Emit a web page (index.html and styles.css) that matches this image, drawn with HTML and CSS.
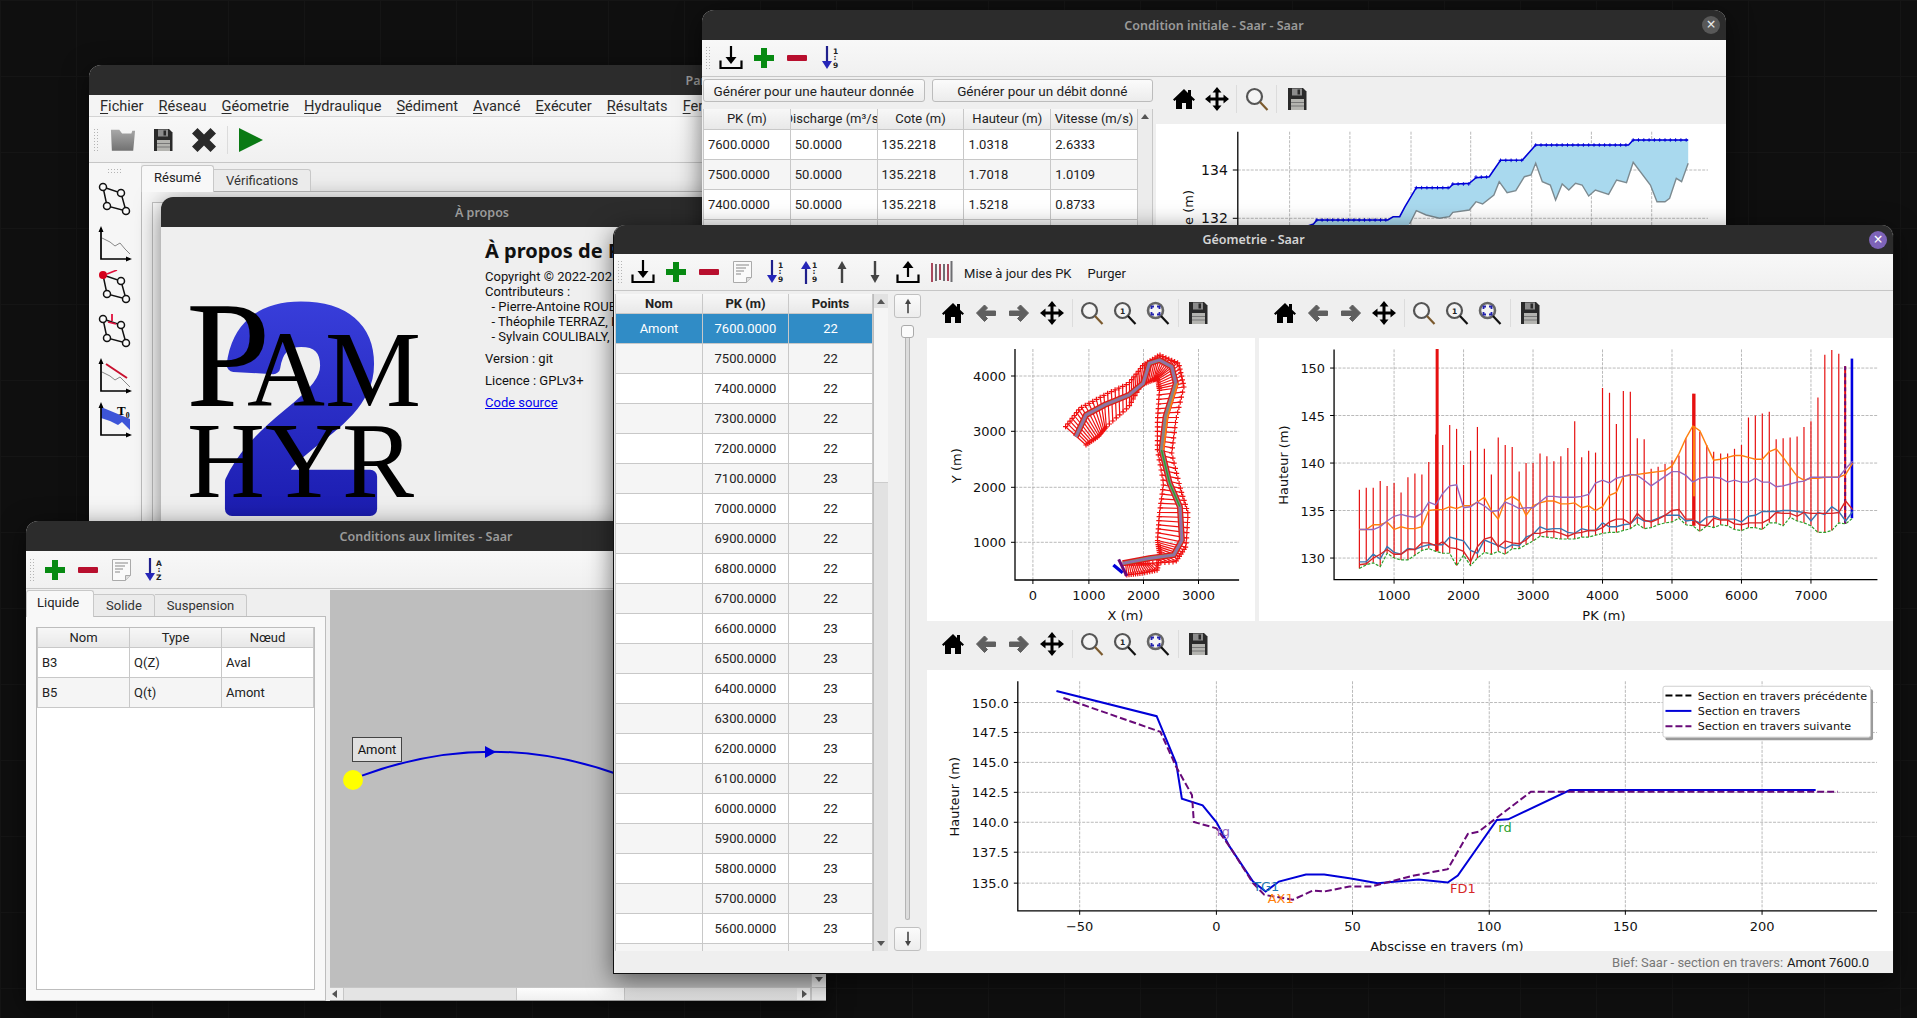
FILE: index.html
```html
<!DOCTYPE html>
<html lang="fr">
<head>
<meta charset="utf-8">
<title>Pamhyr2</title>
<link rel="stylesheet" href="styles.css">
</head>
<body>
<svg class="defs" aria-hidden="true">
  <defs>
    <linearGradient id="g-two" x1="0" y1="0" x2="0" y2="1"><stop offset="0" stop-color="#3f46e4"/><stop offset="1" stop-color="#1414a6"/></linearGradient>
    <linearGradient id="g-folder" x1="0" y1="0" x2="0" y2="1"><stop offset="0" stop-color="#a8a8a8"/><stop offset="1" stop-color="#727272"/></linearGradient>
    <symbol id="i-import" viewBox="0 0 24 24"><path class="s2" d="M12 0v15"/><path d="M6.5 11 12 18l5.5-7z"/><path class="s2" d="M1.5 14.500v7.500h21v-7.500"/></symbol>
    <symbol id="i-export" viewBox="0 0 24 24"><path class="s2" d="M12 7v10"/><path d="M6.500 8 12 1l5.500 7z"/><path class="s2" d="M1.500 14.500v7.500h21v-7.500"/></symbol>
    <symbol id="i-plus" viewBox="0 0 24 24"><path fill="#078a12" d="M9 2h6v7h7v6h-7v7H9v-7H2V9h7z"/></symbol>
    <symbol id="i-minus" viewBox="0 0 24 24"><rect x="2" y="9" width="20" height="6" rx="1" fill="#b80f2e"/></symbol>
    <symbol id="i-doc" viewBox="0 0 24 24"><path d="M3.500 1.500h18v16l-5 5h-13z" fill="#fafafa" stroke="#aaa"/><path d="M6 5h13M6 8h10M6 11h8M6 14h5" fill="none" stroke="#888"/><path d="M16.500 22.500v-5h5" fill="#ddd" stroke="#aaa"/></symbol>
    <symbol id="i-sort-down" viewBox="0 0 24 24"><path d="M9 0v17" stroke="#20208c" stroke-width="2.200" fill="none"/><path d="M4 15h10l-5 8z" fill="#2626b8"/><text class="ic-num" x="15" y="8">1</text><text class="ic-num" x="15.500" y="14">:</text><text class="ic-num" x="15" y="22">9</text></symbol>
    <symbol id="i-sort-up" viewBox="0 0 24 24"><path d="M9 7v17" stroke="#20208c" stroke-width="2.200" fill="none"/><path d="M4 9h10L9 1z" fill="#2626b8"/><text class="ic-num" x="15" y="8">1</text><text class="ic-num" x="15.500" y="14">:</text><text class="ic-num" x="15" y="22">9</text></symbol>
    <symbol id="i-sort-az" viewBox="0 0 24 24"><path d="M8 0v17" stroke="#20208c" stroke-width="2.200" fill="none"/><path d="M3 15h10l-5 8z" fill="#2626b8"/><text class="ic-num" x="14" y="8">A</text><text class="ic-num" x="15.500" y="14">:</text><text class="ic-num" x="14" y="22">Z</text></symbol>
    <symbol id="i-up" viewBox="0 0 24 24"><path d="M12 7v16" stroke="#444" stroke-width="2.400" fill="none"/><path d="M7.500 9 12 1l4.500 8z" fill="#444"/></symbol>
    <symbol id="i-down" viewBox="0 0 24 24"><path d="M12 1v16" stroke="#444" stroke-width="2.400" fill="none"/><path d="M7.500 15 12 23l4.500-8z" fill="#444"/></symbol>
    <symbol id="i-stripes" viewBox="0 0 24 24"><path d="M3 3v19M11 4v16M19 4v17" stroke="#a8485c" stroke-width="2" fill="none"/><path d="M7 4v17M15 4v17M22.500 1v21" stroke="#6e6e72" stroke-width="2" fill="none"/></symbol>
    <symbol id="i-home" viewBox="0 0 24 24"><path d="M12 2 1 12.500l1.500 1.500L4 12.700V22h6v-6h4v6h6v-9.300l1.500 1.300 1.500-1.500-4-3.800V3h-3v3z"/></symbol>
    <symbol id="i-back" viewBox="0 0 24 24"><path fill="#5f5f5f" stroke="#5f5f5f" stroke-linejoin="round" d="M2.500 12 10.500 4l3 3-3 3H21.500v4.500H10.500l3 3-3 3z"/></symbol>
    <symbol id="i-fwd" viewBox="0 0 24 24"><path fill="#5f5f5f" stroke="#5f5f5f" stroke-linejoin="round" d="M21.500 12 13.500 4l-3 3 3 3H2.500v4.500h11l-3 3 3 3z"/></symbol>
    <symbol id="i-move" viewBox="0 0 24 24"><path d="M12 0l4.500 5.500h-3v5h5v-3L24 12l-5.500 4.500v-3h-5v5h3L12 24l-4.500-5.500h3v-5h-5v3L0 12l5.500-4.500v3h5v-5h-3z"/></symbol>
    <symbol id="i-zoom" viewBox="0 0 24 24"><circle cx="9.500" cy="9.500" r="7.500" fill="#f4f4f4" stroke="#555" stroke-width="2.200"/><path d="M15 15l7.500 8" stroke="#7b5a2e" stroke-width="2.200" fill="none"/></symbol>
    <symbol id="i-zoom1" viewBox="0 0 24 24"><circle cx="9.500" cy="9.500" r="7.500" fill="#f4f4f4" stroke="#555" stroke-width="2.200"/><text class="ic-num" x="7" y="13">1</text><path d="M15 15l7.500 8" stroke="#111" stroke-width="2.200" fill="none"/></symbol>
    <symbol id="i-zoomfit" viewBox="0 0 24 24"><circle cx="9.500" cy="9.500" r="7.500" fill="#f4f4f4" stroke="#666" stroke-width="2.600"/><path d="M5.500 8V5.500H8M11 5.500h2.500V8M13.500 11v2.500H11M8 13.500H5.500V11" fill="none" stroke="#2222b0" stroke-width="1.800"/><path d="M15 15l7.500 8" stroke="#111" stroke-width="2.200" fill="none"/></symbol>
    <symbol id="i-save" viewBox="0 0 24 24"><path d="M3 1h15l3.500 3.500V23H3z" fill="#2a2a2a"/><rect x="7" y="1.500" width="10" height="7" fill="#8c8c8c"/><rect x="12.500" y="2.500" width="2.500" height="5" fill="#2a2a2a"/><rect x="6" y="12" width="13" height="11" fill="#b4b4b0"/><path d="M6 15.500h13M6 19h13" stroke="#777" fill="none"/></symbol>
    <symbol id="i-folder" viewBox="0 0 28 24"><path fill="url(#g-folder)" d="M1 1h9l3 4h10l1-3h3l-2 21.500H2z"/></symbol>
    <symbol id="i-cross" viewBox="0 0 24 24"><path fill="#2a2a2a" d="M5.500 0 12 6.500 18.500 0 24 5.500 17.500 12 24 18.500 18.500 24 12 17.500 5.500 24 0 18.500 6.500 12 0 5.500z"/></symbol>
    <symbol id="i-play" viewBox="0 0 24 24"><path fill="#0a7a14" d="M0 0l24 12L0 24z"/></symbol>
    <symbol id="i-net" viewBox="0 0 34 36"><g class="net"><path d="M5 5 23 11 28 29 9 24z"/><circle cx="5" cy="5" r="3.500"/><circle cx="23" cy="11" r="3.500"/><circle cx="9" cy="24" r="3.500"/><circle cx="28" cy="29" r="3.500"/></g></symbol>
    <symbol id="i-net-add" viewBox="0 0 34 36"><g class="net"><path d="M5 5 23 11 28 29 9 24z"/><circle cx="23" cy="11" r="3.500"/><circle cx="9" cy="24" r="3.500"/><circle cx="28" cy="29" r="3.500"/></g><circle cx="5" cy="5" r="4" fill="#d5001c"/><path d="M19 0 9 4" stroke="#e0103c" stroke-width="1.600"/></symbol>
    <symbol id="i-net-split" viewBox="0 0 34 36"><g class="net"><path d="M5 5 23 11 28 29 9 24z"/><circle cx="5" cy="5" r="3.500"/><circle cx="23" cy="11" r="3.500"/><circle cx="9" cy="24" r="3.500"/><circle cx="28" cy="29" r="3.500"/></g><path d="M14-1v8M10 8l8 2" stroke="#e0103c" stroke-width="1.800"/></symbol>
    <symbol id="i-graph" viewBox="0 0 34 36"><path class="ax" d="M3 3v30h29"/><path d="M3 0 .5 6h5zM34 33l-6-2.500v5z"/><path d="M4 12l8 4 5 4 5-3 5 6 5 5" fill="none" stroke="#888"/></symbol>
    <symbol id="i-graph-arrow" viewBox="0 0 34 36"><path class="ax" d="M3 3v30h29"/><path d="M3 0 .5 6h5zM34 33l-6-2.500v5z"/><path d="M4 14l8 4 5 4 5-3 5 5 5 5" fill="none" stroke="#888"/><path d="M8 6l21 14" stroke="#c8102e" stroke-width="2"/></symbol>
    <symbol id="i-graph-t" viewBox="0 0 34 36"><path d="M3 5l29 12v11L24 20l-4 3-8-4-9-3z" fill="#3d55d8"/><path class="ax" d="M3 3v30h29"/><path d="M3 0 .5 6h5zM34 33l-6-2.500v5z"/><text class="ic-t" x="19" y="13">T₀</text></symbol>
  </defs>
</svg>

<main class="desktop">

  <section class="window w-main">
    <header class="titlebar"><span>Pamhyr2 - Saar</span></header>
    <nav class="menubar">
      <span><u>F</u>ichier</span><span><u>R</u>éseau</span><span><u>G</u>éometrie</span><span><u>H</u>ydraulique</span><span><u>S</u>édiment</span><span><u>A</u>vancé</span><span><u>E</u>xécuter</span><span><u>R</u>ésultats</span><span><u>F</u>enêtres</span>
    </nav>
    <div class="toolbar tb-main">
      <i class="grip"></i>
      <svg class="ic-28"><use href="#i-folder"/></svg>
      <svg class="ic-28"><use href="#i-save"/></svg>
      <svg class="ic-28"><use href="#i-cross"/></svg>
      <i class="tb-sep"></i>
      <svg class="ic-28"><use href="#i-play"/></svg>
    </div>
    <div class="main-body">
      <aside class="sidebar">
        <i class="grip-h"></i>
        <svg class="side-ic"><use href="#i-net"/></svg>
        <svg class="side-ic"><use href="#i-graph"/></svg>
        <svg class="side-ic"><use href="#i-net-add"/></svg>
        <svg class="side-ic"><use href="#i-net-split"/></svg>
        <svg class="side-ic"><use href="#i-graph-arrow"/></svg>
        <svg class="side-ic"><use href="#i-graph-t"/></svg>
      </aside>
      <div class="main-content">
        <div class="tabs tabs-main"><span class="tab on">Résumé</span><span class="tab">Vérifications</span></div>
        <div class="pane pane-main"><div class="frame"></div></div>
      </div>
    </div>
  </section>

  <section class="window w-about">
    <header class="titlebar"><span>À propos</span></header>
    <div class="about-body">
      <svg class="logo" viewBox="162 228 323 330">
        <text class="logo-two" x="223" y="510">2</text>
        <text class="logo-big" x="187" y="407">P</text>
        <text class="logo-mid" x="248" y="407">A</text>
        <text class="logo-mid" x="326" y="407">M</text>
        <text class="logo-mid" x="188" y="498">H</text>
        <text class="logo-mid" x="266" y="498">Y</text>
        <text class="logo-mid" x="343" y="498">R</text>
      </svg>
      <div class="about-text">
        <h1>À propos de Pamhyr2</h1>
        <p>Copyright © 2022-2025 INRAE<br>Contributeurs :<br>&nbsp;&nbsp;- Pierre-Antoine ROUBY<br>&nbsp;&nbsp;- Théophile TERRAZ, INRAE<br>&nbsp;&nbsp;- Sylvain COULIBALY, INRAE</p>
        <p>Version : git</p>
        <p>Licence : GPLv3+</p>
        <p><a href="#code">Code source</a></p>
      </div>
    </div>
  </section>

  <section class="window w-init">
    <header class="titlebar"><span>Condition initiale - Saar - Saar</span><b class="close">×</b></header>
    <div class="toolbar tb-init">
      <i class="grip"></i>
      <svg class="ic"><use href="#i-import"/></svg>
      <svg class="ic"><use href="#i-plus"/></svg>
      <svg class="ic"><use href="#i-minus"/></svg>
      <svg class="ic"><use href="#i-sort-down"/></svg>
    </div>
    <div class="init-body">
      <div class="init-left">
        <div class="init-btns"><button>Générer pour une hauteur donnée</button><button>Générer pour un débit donné</button></div>
        <div class="init-table">
          <table class="grid-table">
            <thead><tr><th>PK (m)</th><th><div class="clip"><span>Discharge (m³/s)</span></div></th><th>Cote (m)</th><th>Hauteur (m)</th><th>Vitesse (m/s)</th></tr></thead>
            <tbody>
              <tr><td>7600.0000</td><td>50.0000</td><td>135.2218</td><td>1.0318</td><td>2.6333</td></tr>
              <tr><td>7500.0000</td><td>50.0000</td><td>135.2218</td><td>1.7018</td><td>1.0109</td></tr>
              <tr><td>7400.0000</td><td>50.0000</td><td>135.2218</td><td>1.5218</td><td>0.8733</td></tr>
              <tr><td>7300.0000</td><td>50.0000</td><td>135.2218</td><td>1.3018</td><td>0.7012</td></tr>
            </tbody>
          </table>
          <div class="vscroll vs-init"><span class="arrow-up"></span></div>
        </div>
      </div>
      <div class="init-plot">
        <div class="mpl-tb tb-short">
          <svg class="ic"><use href="#i-home"/></svg><svg class="ic"><use href="#i-move"/></svg><i class="tb-sep"></i><svg class="ic"><use href="#i-zoom"/></svg><i class="tb-sep"></i><svg class="ic"><use href="#i-save"/></svg>
        </div>
        <svg id="plot-init" class="canvas" viewBox="1156 124 570 126"></svg>
      </div>
    </div>
  </section>

  <section class="window w-bc">
    <header class="titlebar"><span>Conditions aux limites - Saar</span></header>
    <div class="toolbar tb-bc">
      <i class="grip"></i>
      <svg class="ic"><use href="#i-plus"/></svg>
      <svg class="ic"><use href="#i-minus"/></svg>
      <svg class="ic"><use href="#i-doc"/></svg>
      <svg class="ic"><use href="#i-sort-az"/></svg>
    </div>
    <div class="bc-body">
      <div class="bc-left">
        <div class="tabs tabs-bc"><span class="tab on">Liquide</span><span class="tab">Solide</span><span class="tab">Suspension</span></div>
        <div class="pane pane-bc">
          <div class="bc-table">
            <table class="grid-table">
              <thead><tr><th>Nom</th><th>Type</th><th>Nœud</th></tr></thead>
              <tbody>
                <tr><td>B3</td><td>Q(Z)</td><td>Aval</td></tr>
                <tr><td>B5</td><td>Q(t)</td><td>Amont</td></tr>
              </tbody>
            </table>
          </div>
        </div>
      </div>
      <div class="bc-right">
        <div class="bc-view">
          <div class="bc-canvas">
            <svg class="network" viewBox="330 590 481 397">
              <path class="edge" d="M362 775.600Q490 728 620 775"/>
              <path class="edge-head" d="M485 746l11 6-11 6z"/>
              <circle class="node" cx="353" cy="780" r="10"/>
            </svg>
            <span class="node-label">Amont</span>
          </div>
          <div class="vscroll vs-bc"><span class="arrow-down"></span></div>
        </div>
        <div class="hscroll">
          <span class="h-btn"><span class="arrow-left"></span></span>
          <span class="h-before"></span><span class="h-thumb"></span><span class="h-after"></span>
          <span class="h-btn"><span class="arrow-right"></span></span>
          <span class="h-corner"></span>
        </div>
      </div>
    </div>
  </section>

  <section class="window w-geo">
    <header class="titlebar active"><span>Géometrie - Saar</span><b class="close on">×</b></header>
    <div class="toolbar tb-geo">
      <i class="grip"></i>
      <svg class="ic"><use href="#i-import"/></svg>
      <svg class="ic"><use href="#i-plus"/></svg>
      <svg class="ic"><use href="#i-minus"/></svg>
      <svg class="ic"><use href="#i-doc"/></svg>
      <svg class="ic"><use href="#i-sort-down"/></svg>
      <svg class="ic"><use href="#i-sort-up"/></svg>
      <svg class="ic"><use href="#i-up"/></svg>
      <svg class="ic"><use href="#i-down"/></svg>
      <svg class="ic"><use href="#i-export"/></svg>
      <svg class="ic"><use href="#i-stripes"/></svg>
      <span class="tb-text">Mise à jour des PK</span>
      <span class="tb-text">Purger</span>
    </div>
    <div class="geo-body">
      <div class="geo-table">
        <table class="grid-table geo">
          <thead><tr><th>Nom</th><th>PK (m)</th><th>Points</th></tr></thead>
          <tbody>
            <tr class="sel"><td>Amont</td><td>7600.0000</td><td>22</td></tr>
            <tr><td></td><td>7500.0000</td><td>22</td></tr>
            <tr><td></td><td>7400.0000</td><td>22</td></tr>
            <tr><td></td><td>7300.0000</td><td>22</td></tr>
            <tr><td></td><td>7200.0000</td><td>22</td></tr>
            <tr><td></td><td>7100.0000</td><td>23</td></tr>
            <tr><td></td><td>7000.0000</td><td>22</td></tr>
            <tr><td></td><td>6900.0000</td><td>22</td></tr>
            <tr><td></td><td>6800.0000</td><td>22</td></tr>
            <tr><td></td><td>6700.0000</td><td>22</td></tr>
            <tr><td></td><td>6600.0000</td><td>23</td></tr>
            <tr><td></td><td>6500.0000</td><td>23</td></tr>
            <tr><td></td><td>6400.0000</td><td>23</td></tr>
            <tr><td></td><td>6300.0000</td><td>23</td></tr>
            <tr><td></td><td>6200.0000</td><td>23</td></tr>
            <tr><td></td><td>6100.0000</td><td>22</td></tr>
            <tr><td></td><td>6000.0000</td><td>22</td></tr>
            <tr><td></td><td>5900.0000</td><td>22</td></tr>
            <tr><td></td><td>5800.0000</td><td>23</td></tr>
            <tr><td></td><td>5700.0000</td><td>23</td></tr>
            <tr><td></td><td>5600.0000</td><td>23</td></tr>
            <tr><td></td><td>5500.0000</td><td>23</td></tr>
          </tbody>
        </table>
        <div class="vscroll vs-geo"><span class="arrow-up"></span><span class="vs-thumb"></span><span class="arrow-down"></span></div>
      </div>
      <div class="slider-col">
        <button class="step"><svg class="ic-16"><use href="#i-up"/></svg></button>
        <div class="slider"><span class="slider-handle"></span><span class="slider-groove"></span></div>
        <button class="step"><svg class="ic-16"><use href="#i-down"/></svg></button>
      </div>
      <div class="plots">
        <div class="plots-top">
          <div class="plot-panel p-map">
            <div class="mpl-tb">
              <svg class="ic"><use href="#i-home"/></svg><svg class="ic"><use href="#i-back"/></svg><svg class="ic"><use href="#i-fwd"/></svg><svg class="ic"><use href="#i-move"/></svg><i class="tb-sep"></i><svg class="ic"><use href="#i-zoom"/></svg><svg class="ic"><use href="#i-zoom1"/></svg><svg class="ic"><use href="#i-zoomfit"/></svg><i class="tb-sep"></i><svg class="ic"><use href="#i-save"/></svg>
            </div>
            <svg id="plot-map" class="canvas" viewBox="927 338 327 283"></svg>
          </div>
          <div class="plot-panel p-long">
            <div class="mpl-tb">
              <svg class="ic"><use href="#i-home"/></svg><svg class="ic"><use href="#i-back"/></svg><svg class="ic"><use href="#i-fwd"/></svg><svg class="ic"><use href="#i-move"/></svg><i class="tb-sep"></i><svg class="ic"><use href="#i-zoom"/></svg><svg class="ic"><use href="#i-zoom1"/></svg><svg class="ic"><use href="#i-zoomfit"/></svg><i class="tb-sep"></i><svg class="ic"><use href="#i-save"/></svg>
            </div>
            <svg id="plot-long" class="canvas" viewBox="1258 338 636 283"></svg>
          </div>
        </div>
        <div class="plot-panel p-cross">
          <div class="mpl-tb tb-cross">
            <svg class="ic"><use href="#i-home"/></svg><svg class="ic"><use href="#i-back"/></svg><svg class="ic"><use href="#i-fwd"/></svg><svg class="ic"><use href="#i-move"/></svg><i class="tb-sep"></i><svg class="ic"><use href="#i-zoom"/></svg><svg class="ic"><use href="#i-zoom1"/></svg><svg class="ic"><use href="#i-zoomfit"/></svg><i class="tb-sep"></i><svg class="ic"><use href="#i-save"/></svg>
          </div>
          <svg id="plot-cross" class="canvas" viewBox="926 670 968 282"></svg>
        </div>
      </div>
    </div>
    <footer class="statusbar"><span class="st-dim">Bief: Saar - section en travers:</span> <span>Amont 7600.0</span></footer>
  </section>

</main>
<script src="script.js"></script>
</body>
</html>
```

FILE: styles.css
```css
* { box-sizing: border-box; }
html, body { margin: 0; padding: 0; height: 100%; }
body { overflow: hidden; background: #0f0f0f; font: 13px "Roboto", "Noto Sans", sans-serif; color: #1a1a1a; }
.defs { position: absolute; width: 0; height: 0; }
.desktop {
  position: relative; width: 1917px; height: 1018px; overflow: hidden;
  background-color: #0f0f0f;
  background-image: linear-gradient(90deg, #151515 1px, transparent 1px), linear-gradient(#151515 1px, transparent 1px);
  background-size: 76px 76px;
}

/* desktop windows */
.window { position: absolute; display: flex; flex-direction: column; background: #efefef; border-radius: 12px 12px 0 0; box-shadow: 0 6px 26px rgba(0,0,0,.55); overflow: hidden; }
.w-main { left: 89px; top: 65px; width: 1285px; height: 840px; }
.w-about { left: 161px; top: 197px; width: 642px; height: 360px; }
.w-init { left: 702px; top: 10px; width: 1024px; height: 240px; }
.w-bc { left: 26px; top: 521px; width: 800px; height: 480px; }
.w-geo { left: 613px; top: 225px; width: 1281px; height: 749px; border: 1px solid #111; border-top: 0; }

.titlebar { flex: none; height: 30px; background: #2c2c2c; color: #9a9a9a; font: 600 12.500px "Noto Sans", sans-serif; display: flex; align-items: center; justify-content: center; position: relative; }
.w-geo .titlebar { height: 29px; }
.titlebar.active { color: #d4d4d4; }
.close { position: absolute; right: 6px; top: 6px; width: 18px; height: 18px; border-radius: 50%; background: #585858; color: #e8e8e8; font: 400 16px/17px "Noto Sans", sans-serif; text-align: center; }
.close.on { background: #7d63b8; color: #fff; }

/* toolbars */
.toolbar { flex: none; display: flex; align-items: center; background: linear-gradient(#f8f8f8, #f0f0f0); border-bottom: 1px solid #c6c6c6; }
.grip { display: block; width: 5px; height: 24px; background-image: radial-gradient(#b4b4b4 .8px, transparent .9px); background-size: 3px 3px; }
.grip-h { display: block; width: 16px; height: 5px; margin: 5px auto 9px; background-image: radial-gradient(#b4b4b4 .8px, transparent .9px); background-size: 3px 3px; }
.tb-sep { display: block; width: 1px; height: 28px; background: #dcdcdc; margin: 0 3px; flex: none; }
.ic { width: 24px; height: 24px; flex: none; }
.ic-28 { width: 26px; height: 24px; flex: none; }
.ic-16 { width: 16px; height: 18px; display: block; margin: auto; }
.ic-num { font: bold 7.500px "DejaVu Sans", sans-serif; fill: #222; }
.ic-t { font: bold 13px "Liberation Serif", serif; fill: #000; }
.s2 { fill: none; stroke: #000; stroke-width: 2.200; }
.tb-main { height: 46px; padding-left: 4px; gap: 14.500px; }
.tb-main .grip { margin-right: -3px; }
.tb-main .tb-sep { margin: 0 -5px 0 -4px; }
.tb-init { height: 37px; padding-left: 3px; gap: 9px; }
.tb-bc { height: 38px; padding-left: 3px; gap: 9px; }
.tb-geo { height: 37px; padding-left: 3px; gap: 9.100px; }
.tb-text { font-size: 13px; margin-left: 4px; margin-right: 3px; padding-top: 2px; }
.tb-text:first-of-type { margin-left: 2px; }

/* main window */
.menubar { flex: none; height: 22px; display: flex; align-items: center; gap: 15px; padding-left: 11px; background: #f4f4f4; border-bottom: 1px solid #d4d4d4; font-size: 14.600px; color: #2a2a2a; }
.menubar u { text-underline-offset: 2px; }
.main-body { flex: 1; display: flex; min-height: 0; }
.sidebar { flex: none; width: 52px; background: #f6f6f6; padding-top: 0; display: flex; flex-direction: column; align-items: center; }
.side-ic { width: 34px; height: 36px; margin-bottom: 8px; flex: none; }
.net { fill: none; stroke: #111; stroke-width: 1.500; }
.net circle { fill: #fafafa; }
.ax { fill: none; stroke: #000; stroke-width: 1.700; }
.main-content { flex: 1; display: flex; flex-direction: column; padding-top: 2px; }
.tabs { display: flex; align-items: flex-end; flex: none; position: relative; z-index: 1; }
.tab { height: 22px; line-height: 22px; padding: 0 12px; background: #ebebeb; border: 1px solid #c8c8c8; border-bottom: 0; border-left: 0; border-radius: 0 3px 0 0; color: #333; font-size: 13px; }
.tab.on { height: 27px; line-height: 24px; background: #f8f8f8; border-left: 1px solid #c8c8c8; border-radius: 3px 3px 0 0; margin-bottom: -1px; color: #222; }
.tabs-bc .tab.on { padding: 0 14px 0 10px; }
.pane { border: 1px solid #bdbdbd; background: #f8f8f8; }
.pane-main { flex: 1; padding: 10px 0 0 10px; }
.frame { height: 100%; border: 1px solid #c4c4c4; background: #fff; }

/* about */
.about-body { flex: 1; display: flex; min-height: 0; }
.logo { width: 323px; height: 330px; flex: none; display: block; }
.logo-two { font: bold 287px "Liberation Sans", sans-serif; fill: url(#g-two); stroke: url(#g-two); stroke-width: 14px; stroke-linejoin: round; }
.logo-big { font: 152px "Liberation Serif", serif; fill: #000; }
.logo-mid { font: 108px "Liberation Serif", serif; fill: #000; }
.about-text { padding: 12px 0 0 1px; font-size: 13px; line-height: 15px; width: 300px; color: #111; }
.about-text h1 { margin: 0 0 6px; font: 700 20px/24px "Noto Sans", sans-serif; white-space: nowrap; }
.about-text p { margin: 0 0 7px; white-space: nowrap; }
.about-text a { color: #0000ee; }

/* tables */
.grid-table { table-layout: fixed; border-collapse: collapse; width: 100%; font-size: 13px; background: #fff; }
.grid-table th { height: 20px; padding: 0; font-weight: 400; text-align: center; background: linear-gradient(#f7f7f7, #e8e8e8); border: 1px solid #c8c8c8; border-top: 0; overflow: hidden; white-space: nowrap; color: #222; }
.grid-table td { height: 30px; padding: 0 4px; border: 1px solid #c8c8c8; overflow: hidden; white-space: nowrap; color: #222; }
.grid-table tbody tr:nth-child(even) td { background: #f5f5f5; }
.clip { display: flex; justify-content: center; overflow: hidden; white-space: nowrap; }
.clip span { flex: none; }
.grid-table.geo { width: 258px; flex: none; align-self: flex-start; }
.grid-table.geo th { font-weight: 700; height: 19px; }
.grid-table.geo th:nth-child(1) { width: 87px; }
.grid-table.geo th:nth-child(2) { width: 86px; }
.grid-table.geo td { text-align: center; }
.grid-table tr.sel td { background: #308cc6; color: #fff; border-color: #c8c8c8; }

/* condition initiale */
.init-body { flex: 1; display: flex; min-height: 0; }
.init-left { flex: none; width: 454px; padding: 2px 3px 0 1px; }
.init-btns { display: flex; gap: 7px; margin-bottom: 7px; }
.init-btns button { flex: 1; height: 23px; padding: 0; font: 13.500px "Roboto", "Noto Sans", sans-serif; color: #222; background: linear-gradient(#fbfbfb, #ececec); border: 1px solid #bcbcbc; border-radius: 3px; }
.init-table { display: flex; }
.init-table .grid-table { flex: 1; }
.init-plot { flex: 1; display: flex; flex-direction: column; min-width: 0; }
.canvas { display: block; background: #fff; flex: 1; min-height: 0; width: 100%; }
.mpl-tb { flex: none; height: 47px; padding: 0 0 3px 9.500px; display: flex; align-items: center; background: #efefef; }
.mpl-tb .ic { width: 24px; margin: 0 4.500px; }
.tb-cross { height: 49px; }
.tb-short { padding-left: 11px; }

/* scrollbars */
.vscroll { flex: none; width: 15px; background: #e3e3e3; position: relative; }
.vs-init { height: 120px; background: #ececec; border-right: 1px solid #c8c8c8; }
.vs-bc { background: #e8e8e8; border-left: 1px solid #c6c6c6; }
.arrow-up, .arrow-down, .arrow-left, .arrow-right { position: absolute; width: 0; height: 0; }
.arrow-up { left: 3px; top: 5px; border: 4.500px solid transparent; border-top: 0; border-bottom: 5px solid #555; }
.arrow-down { left: 3px; bottom: 5px; border: 4.500px solid transparent; border-bottom: 0; border-top: 5px solid #555; }
.vs-thumb { position: absolute; left: 0; right: 0; top: 14px; height: 175px; background: #f5f5f5; border-bottom: 1px solid #ccc; }
.vs-geo { background: #e2e2e2; border-left: 1px solid #bdbdbd; }

/* boundary conditions */
.bc-body { flex: 1; display: flex; gap: 4px; min-height: 0; }
.bc-left { flex: none; width: 300px; display: flex; flex-direction: column; padding-top: 1px; }
.pane-bc { flex: 1; padding: 10px; min-height: 0; border-left: 0; }
.bc-table { height: 100%; border: 1px solid #bdbdbd; background: #fff; }
.bc-table .grid-table td { border-color: #c8c8c8; }
.bc-table .grid-table th { height: 19px; }
.bc-right { flex: 1; display: flex; flex-direction: column; min-width: 0; padding-top: 1px; }
.bc-view { flex: 1; display: flex; min-height: 0; }
.bc-canvas { flex: 1; position: relative; background: #bebebe; min-width: 0; }
.network { width: 100%; height: 100%; display: block; }
.edge { fill: none; stroke: #0000d8; stroke-width: 2; }
.edge-head { fill: #0000d8; }
.node { fill: #ffff00; }
.node-label { position: absolute; left: 22px; top: 147px; width: 50px; height: 25px; line-height: 23px; text-align: center; background: #e0e0e0; border: 1px solid #444; font-size: 13px; color: #111; }
.hscroll { flex: none; height: 14px; display: flex; background: #e4e4e4; border-top: 1px solid #c6c6c6; border-bottom: 1px solid #9a9a9a; }
.h-btn { width: 14px; flex: none; position: relative; background: #f0f0f0; border-right: 1px solid #c6c6c6; }
.h-before { width: 172px; flex: none; background: #e4e4e4; }
.h-thumb { width: 109px; flex: none; background: linear-gradient(#fdfdfd, #f0f0f0); border: 1px solid #c8c8c8; border-width: 0 1px; }
.h-after { flex: 1; background: linear-gradient(#e8e8e8, #dcdcdc); }
.h-corner { width: 15px; flex: none; background: #e8e8e8; border-left: 1px solid #c6c6c6; }
.arrow-left { left: 2px; top: 2px; border: 4.500px solid transparent; border-left: 0; border-right: 5px solid #555; }
.arrow-right { left: 5px; top: 2px; border: 4.500px solid transparent; border-right: 0; border-left: 5px solid #555; }

/* geometry */
.geo-body { flex: 1; display: grid; grid-template-columns: 274px 39px 1fr; min-height: 0; }
.geo-table { display: flex; padding: 3px 0 0 1px; overflow: hidden; min-height: 0; height: 100%; }
.vs-geo { align-self: stretch; }
.slider-col { display: flex; flex-direction: column; align-items: center; padding: 3px 0 0 0; }
.step { flex: none; width: 27px; height: 24px; padding: 0; background: linear-gradient(#fbfbfb, #ededed); border: 1px solid #c0c0c0; border-radius: 3px; }
.slider { flex: 1; width: 100%; display: flex; flex-direction: column; align-items: center; padding: 7px 0 7px; }
.slider-handle { flex: none; width: 13px; height: 13px; background: #fbfbfb; border: 1px solid #aaa; border-radius: 3px; }
.slider-groove { flex: 1; width: 5px; background: #dcdcdc; border: 1px solid #b4b4b4; border-top: 0; border-radius: 0 0 3px 3px; }
.plots { display: grid; grid-template-rows: 330px 331px; min-width: 0; min-height: 0; }
.plots-top { display: flex; gap: 4px; min-height: 0; }
.plot-panel { display: flex; flex-direction: column; min-height: 0; min-width: 0; }
.p-map { width: 328px; flex: none; }
.p-long { flex: 1; }
.statusbar { flex: none; height: 22px; display: flex; align-items: center; justify-content: flex-end; gap: 4px; padding-right: 24px; font-size: 13px; background: #efefef; color: #1a1a1a; }
.st-dim { color: #777; }

/* plots */
.gl { stroke: #a8a8a8; stroke-width: .8; stroke-dasharray: 3 1.300; fill: none; }
.sp { stroke: #000; stroke-width: 1.300; fill: none; }
.tk { font: 13px "DejaVu Sans", sans-serif; fill: #111; }
.tk-m { font-size: 14px; }
.lbl { font: 13px "DejaVu Sans", sans-serif; fill: #111; }
.lg { font: 11.200px "DejaVu Sans", sans-serif; fill: #111; }
.lg-box { fill: #fff; stroke: #cfcfcf; }
.lg-shadow { fill: #9a9a9a; }
.nofill { fill: none; }
```

FILE: script.js
```js
const NS = 'http://www.w3.org/2000/svg';
function el(svg, tag, attrs, text) {
  const e = document.createElementNS(NS, tag);
  for (const k in attrs) e.setAttribute(k, attrs[k]);
  if (text !== undefined) e.textContent = text;
  svg.appendChild(e);
  return e;
}
function line(svg, pts, stroke, width, dash, cls) {
  const a = { d: 'M' + pts.map(p => p[0].toFixed(1) + ' ' + p[1].toFixed(1)).join('L'), fill: 'none', stroke: stroke, 'stroke-width': width };
  if (dash) a['stroke-dasharray'] = dash;
  if (cls) a.class = cls;
  return el(svg, 'path', a);
}
function axes(svg, o) {
  o.xt.forEach(t => {
    line(svg, [[t[0], o.top], [t[0], o.bottom]], '#a8a8a8', .8, null, 'gl');
    line(svg, [[t[0], o.bottom], [t[0], o.bottom + 4]], '#000', 1);
    el(svg, 'text', { class: 'tk', x: t[0], y: o.bottom + 20, 'text-anchor': 'middle' }, t[1]);
  });
  o.yt.forEach(t => {
    line(svg, [[o.left, t[0]], [o.right, t[0]]], '#a8a8a8', .8, null, 'gl');
    line(svg, [[o.left - 4, t[0]], [o.left, t[0]]], '#000', 1);
    el(svg, 'text', { class: 'tk', x: o.left - 9, y: t[0] + 5, 'text-anchor': 'end' }, t[1]);
  });
  line(svg, [[o.left, o.top], [o.left, o.bottom], [o.right, o.bottom]], '#000', 1.3);
  if (o.xl) el(svg, 'text', { class: 'lbl', x: o.xl[0], y: o.xl[1], 'text-anchor': 'middle' }, o.xl[2]);
  if (o.yl) el(svg, 'text', { class: 'lbl', x: 0, y: 0, 'text-anchor': 'middle', transform: 'translate(' + o.yl[0] + ' ' + o.yl[1] + ') rotate(-90)' }, o.yl[2]);
}
function resample(p, n) {
  const out = [];
  for (let i = 0; i <= n; i++) {
    const t = i / n * (p.length - 1), k = Math.min(Math.floor(t), p.length - 2), f = t - k;
    out.push([p[k][0] + (p[k + 1][0] - p[k][0]) * f, p[k][1] + (p[k + 1][1] - p[k][1]) * f]);
  }
  return out;
}
function plus(svg, pts, s, color, w) {
  const d = pts.map(p => 'M' + (p[0] - s).toFixed(1) + ' ' + p[1].toFixed(1) + 'h' + 2 * s + 'M' + p[0].toFixed(1) + ' ' + (p[1] - s).toFixed(1) + 'v' + 2 * s).join('');
  el(svg, 'path', { d: d, stroke: color, 'stroke-width': w, fill: 'none' });
}

/* ---------- plan view ---------- */
(function () {
  const svg = document.getElementById('plot-map');
  const z = p => p.map(q => [610 + q[0] / 2.45, 220 + q[1] / 3]);
  axes(svg, {
    left: 1014.5, right: 1238.6, top: 349, bottom: 580,
    xt: [[1032.4, '0'], [1088.4, '1000'], [1143, '2000'], [1198, '3000']],
    yt: [[376, '4000'], [431.3, '3000'], [487.3, '2000'], [542.3, '1000']],
    xl: [1125, 620, 'X (m)'], yl: [960, 465.7, 'Y (m)']
  });
  const center = z([[1140, 650], [1165, 585], [1210, 555], [1270, 525], [1305, 490], [1320, 430], [1345, 420], [1375, 440], [1385, 490], [1360, 590], [1350, 690], [1370, 790], [1395, 860], [1400, 960], [1380, 1005], [1320, 1015], [1255, 1030]]);
  const a = z([[1115, 620], [1150, 565], [1210, 525], [1270, 490], [1305, 435], [1345, 405], [1392, 430], [1405, 500], [1385, 600], [1375, 700], [1395, 800], [1415, 880], [1410, 980], [1385, 1025], [1320, 1030], [1290, 1030], [1262, 1030]]);
  const b = z([[1165, 675], [1195, 650], [1215, 620], [1270, 560], [1300, 495], [1330, 480], [1340, 475], [1345, 510], [1340, 600], [1340, 690], [1355, 790], [1345, 880], [1340, 960], [1345, 1000], [1340, 1050], [1300, 1060], [1265, 1065]]);
  const n = 105, ra = resample(a, n), rb = resample(b, n);
  ra.forEach((p, i) => line(svg, [p, rb[i]], '#f01010', 1.2));
  plus(svg, ra, 2.6, '#f01010', 1.2);
  plus(svg, rb, 2.6, '#f01010', 1.2);
  line(svg, center, '#e01818', 6);
  line(svg, center, '#868686', 3.4);
  line(svg, center.slice(0, 9), '#9467bd', 1.2);
  line(svg, center.slice(8, 11).map(p => [p[0] + 2, p[1]]), '#ff7f0e', 1.6);
  line(svg, center.slice(10, 13), '#2ca02c', 1.4);
  line(svg, center.slice(12), '#9467bd', 1.2);
  line(svg, z([[1232, 1035], [1255, 1058]]), '#0000d8', 3.4);
  line(svg, z([[1245, 1018], [1265, 1068]]), '#680a78', 3);
})();

/* ---------- longitudinal profile ---------- */
(function () {
  const svg = document.getElementById('plot-long');
  const X = k => 1393.5 + (k - 1000) * 0.0697, Y = v => 558.3 - (v - 130) * 9.53;
  axes(svg, {
    left: 1333.3, right: 1878.4, top: 349, bottom: 580,
    xt: [1000, 2000, 3000, 4000, 5000, 6000, 7000].map(k => [X(k), String(k)]),
    yt: [130, 135, 140, 145, 150].map(v => [Y(v), String(v)]),
    xl: [1604, 620, 'PK (m)'], yl: [1287, 465, 'Hauteur (m)']
  });
  const top = [137.2,137.4,137.4,138.1,137.6,137.9,136.9,138.5,138.9,138.8,140.1,143,141.9,144,143.6,139.8,141.3,143.8,141.5,138.8,142.7,141.9,141.7,139.1,140,140,141,140.7,140.2,140.7,141.6,144.4,140.6,141.3,141.1,147.9,147.4,144.1,147.6,147.5,142.6,142.5,139.4,139.6,139.9,140.3,140.8,142.6,147.3,143.3,141.9,141.2,141,141,141.5,141.9,144.8,145,145.2,145.4,142.5,142.6,142.7,142.8,143.8,144.4,146.9,151.4,151.9,151.5,150.2,151];
  const green = [128.9,129.3,129.5,129.1,130.5,130,129.8,129.8,130.3,130.8,131,130.7,130.5,130.5,129.2,130.3,129.2,130,130.6,130.4,130.7,130.4,131,131,131.4,131.8,132.3,132.2,132.1,132,132,132,132.2,132.2,132.4,132.6,132.7,132.7,132.9,133.1,133.6,133.1,133.2,133.5,133.7,133.8,134.2,133.5,133.4,132.8,133.4,133.2,133.5,133.4,133,132.9,133.2,133.2,133,133.7,133.7,133.4,134.3,133.9,133.7,133.4,132.7,132.7,132.9,133.7,133.6,134.2];
  const orange = [133,133,133.5,133.5,133.8,133,133.3,133.1,133.1,133.3,135,135.1,135.1,135.4,135.2,135.5,135.5,135.9,136.4,135,134.1,136.1,136.5,136,134.5,135.5,135.8,136,136,135.7,135.7,135.8,135.3,135.5,135,135.4,136.6,136.9,138.6,138.7,138.8,138.9,139,139.1,139.2,139.7,141,142.6,143.9,143.4,141.8,140.3,140.4,140.6,140.8,140.8,140.6,140.4,140.4,141.2,141.5,140.6,139.6,138.6,138.2,138.4,138.4,138.5,138.5,138.5,138.8,140];
  const purple = [133,133,133,133.3,133.9,134.4,134.6,134.4,134.3,134.7,135.9,135.6,136.8,137.6,137.7,135.3,135.4,135.9,135.5,134.9,135,135.9,135.6,135.2,135.3,135.3,135.9,136.5,136.5,136.4,136.4,136.4,136.5,136.7,137.9,138.2,137.9,138.4,138.6,138.8,138.7,138.2,137.6,138.1,138.6,139.1,139.1,138.7,138,138.4,138.5,138.5,138.4,138,138.2,138,138,138.4,138,138,137.5,137.6,137.8,138,138.1,138.5,138.5,138.5,138.5,138.5,139.4,140.2];
  const blue = [129.6,129.6,130.4,129.9,131.2,130.6,130.4,131,130.9,131.2,131.4,131.4,131.4,132.2,132,131.8,130.8,130.5,131.9,131.6,131.3,131,131.4,131.3,132.2,132.5,133.3,133,133.1,133.1,132.7,132.6,133.1,132.9,132.9,133.7,133.3,133.3,133.5,133.6,134.3,133.9,133.9,134.2,134.5,134.5,134.5,133.9,134,133.7,134.3,134.4,134.1,134.1,134.1,133.8,134.4,134.5,134.9,134.9,134.9,135,135,134.9,134.8,133.9,134.8,134.6,135.4,134.9,133.9,134.9];
  const red = [129.3,129.4,130,130.4,130.9,130.4,130.4,130.9,130.9,131.6,131.6,131.3,131.7,131.1,131,130.7,129.6,131.2,132,132.2,131.2,131.8,131.6,131.5,131.9,132.6,132.6,132.8,132.8,132.6,132.3,132.6,132.7,132.9,132.9,133.2,133.8,134.1,134.1,133.6,134.7,134,133.8,134.1,134.5,135,135.1,134.1,134.1,133.5,133.4,134.2,134,134,133.6,133.5,133.7,133.7,133.7,134.1,134.8,134.7,134.7,134.4,134.8,134.7,134.7,134.7,134.7,134.8,136,135.1];
  const pk = i => 500 + 100 * i;
  const series = a => a.map((v, i) => [X(pk(i)), Y(v)]);
  top.forEach((v, i) => { if (i < 70) line(svg, [[X(pk(i)), Y(green[i])], [X(pk(i)), Y(v)]], '#e61010', 1.2); });
  line(svg, [[X(1620), Y(130.7)], [X(1620), Y(152)]], '#e61010', 3);
  line(svg, [[X(5317), Y(133.4)], [X(5317), Y(147.3)]], '#e61010', 3);
  line(svg, [[X(7492), Y(133.6)], [X(7492), Y(150.2)]], '#e61010', 2);
  line(svg, [[X(7492), Y(133.6)], [X(7492), Y(150.2)]], '#680a78', 2, '4 3');
  line(svg, [[X(7590), Y(134.2)], [X(7590), Y(151)]], '#0000e0', 2.6);
  line(svg, [[X(5317), Y(143.9)], [X(5317), Y(136.5)]], '#ff7f0e', 2);
  line(svg, series(green), '#2ca02c', 1.2, '3 1.5');
  line(svg, series(blue), '#3b75af', 1.4);
  line(svg, series(red), '#d62728', 1.4);
  line(svg, series(orange), '#ff7f0e', 1.4);
  line(svg, series(purple), '#9467bd', 1.4);
})();

/* ---------- cross section ---------- */
(function () {
  const svg = document.getElementById('plot-cross');
  const z = p => p.map(q => [920 + q[0] / 1.584, 620 + q[1] / 3]);
  axes(svg, {
    left: 1017, right: 1878, top: 681, bottom: 911,
    xt: [[1079, '−50'], [1216, '0'], [1352.4, '50'], [1489.4, '100'], [1625.8, '150'], [1762.8, '200']],
    yt: [[702.3, '150.0'], [732.3, '147.5'], [762.3, '145.0'], [792.3, '142.5'], [822.3, '140.0'], [852.3, '137.5'], [883.3, '135.0']],
    xl: [1447, 951, 'Abscisse en travers (m)'], yl: [958, 796.7, 'Hauteur (m)']
  });
  line(svg, z([[215, 212], [374, 288], [405, 430], [414, 536], [447, 556], [469, 607], [490, 680], [527, 785], [547, 815], [568, 785], [611, 764], [640, 764], [680, 775], [725, 790], [790, 779], [836, 788], [852, 767], [914, 600], [932, 598], [1030, 510], [1420, 510]]), '#0000d8', 2);
  line(svg, z([[226, 233], [380, 335], [405, 440], [430, 525], [433, 606], [469, 625], [490, 680], [527, 790], [545, 825], [590, 840], [622, 812], [640, 815], [680, 800], [715, 800], [780, 768], [836, 748], [868, 642], [885, 635], [916, 590], [968, 515], [1455, 515]]), '#680a78', 2, '7 3');
  [['rg', 480, 632, '#9467bd'], ['TG1', 548, 800, '#1f77b4'], ['AX1', 571, 835, '#ff7f0e'], ['FD1', 860, 805, '#d62728'], ['rd', 927, 620, '#2ca02c']].forEach(t => {
    const p = z([[t[1], t[2]]])[0];
    el(svg, 'text', { class: 'tk', x: p[0], y: p[1] + 5, 'text-anchor': 'middle', style: 'fill:' + t[3] }, t[0]);
  });
  el(svg, 'rect', { class: 'lg-shadow', x: 1666, y: 689, width: 208, height: 51, rx: 2 });
  el(svg, 'rect', { class: 'lg-box', x: 1663.5, y: 686, width: 208, height: 51, rx: 2 });
  [[695.3, '#000', '7 3', 'Section en travers précédente'], [710.7, '#0000d8', null, 'Section en travers'], [726, '#680a78', '7 3', 'Section en travers suivante']].forEach(r => {
    line(svg, [[1666, r[0]], [1692, r[0]]], r[1], 2, r[2]);
    el(svg, 'text', { class: 'lg', x: 1698.4, y: r[0] + 4 }, r[3]);
  });
})();

/* ---------- initial condition ---------- */
(function () {
  const svg = document.getElementById('plot-init');
  const z = p => p.map(q => [690 + q[0] / 1.5077, q[1] / 3]);
  const L = 1237.8;
  [904, 995, 1087, 1177, 1269, 1359, 1450].forEach(v => {
    const x = 690 + v / 1.5077;
    line(svg, [[x, 131.7], [x, 250]], '#a8a8a8', .8, null, 'gl');
  });
  [[170, '134'], [218.3, '132']].forEach(t => {
    line(svg, [[L, t[0]], [1708, t[0]]], '#a8a8a8', .8, null, 'gl');
    line(svg, [[L - 5, t[0]], [L, t[0]]], '#000', 1);
    el(svg, 'text', { class: 'tk tk-m', x: L - 10, y: t[0] + 5, 'text-anchor': 'end' }, t[1]);
  });
  line(svg, [[L, 131.7], [L, 250]], '#000', 1.3);
  el(svg, 'text', { class: 'lbl', x: 0, y: 0, 'text-anchor': 'end', transform: 'translate(1193 190) rotate(-90)' }, 'Cote (m)');
  const water = z([[862, 740], [900, 700], [940, 672], [945, 660], [1052, 660], [1060, 650], [1070, 650], [1078, 620], [1095, 563], [1145, 563], [1150, 553], [1175, 550], [1185, 533], [1205, 530], [1222, 481], [1255, 480], [1275, 435], [1415, 435], [1422, 420], [1505, 420]]);
  const bed = z([[1085, 672], [1095, 632], [1110, 645], [1130, 655], [1145, 650], [1150, 637], [1175, 630], [1185, 605], [1195, 612], [1212, 585], [1220, 545], [1232, 578], [1245, 572], [1258, 530], [1268, 525], [1275, 490], [1285, 545], [1297, 555], [1305, 600], [1315, 552], [1325, 570], [1335, 550], [1345, 555], [1355, 588], [1365, 570], [1385, 583], [1397, 540], [1412, 548], [1422, 487], [1448, 555], [1458, 605], [1470, 605], [1477, 595], [1487, 535], [1495, 545], [1505, 490]]);
  const poly = water.concat(bed.slice().reverse(), [[1380, 250], [1300, 250]]);
  el(svg, 'path', { d: 'M' + poly.map(p => p[0].toFixed(1) + ' ' + p[1].toFixed(1)).join('L') + 'Z', fill: '#a9d9ee' });
  line(svg, bed, '#7c8a90', 1.4);
  line(svg, water, '#0000d8', 1.6);
  const markers = [];
  [[945, 1052], [1095, 1145], [1150, 1175], [1185, 1205], [1222, 1255], [1275, 1415], [1422, 1505]].forEach((s, i) => {
    const ys = [660, 563, 552, 531, 481, 435, 420][i];
    for (let v = s[0]; v <= s[1]; v += 8) markers.push([v, ys]);
  });
  plus(svg, z(markers), 1.8, '#0000d8', .9);
})();
```
